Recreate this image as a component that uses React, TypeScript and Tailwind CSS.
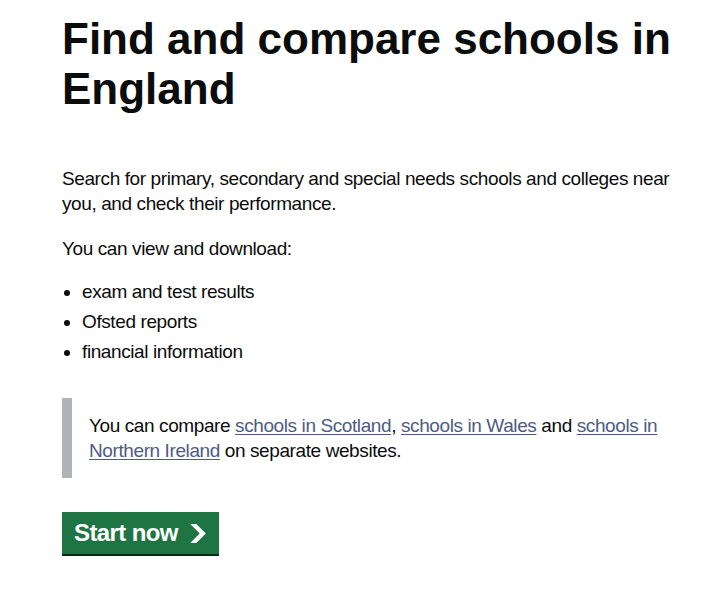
export default function App() {
  return (
    <div className="min-h-[592px] bg-white text-[#0b0c0c] font-['Liberation_Sans',Arial,sans-serif]">
      <main className="w-[620px] ml-[62px] pt-[14px]">
        <h1 className="text-[44px] leading-[50px] font-bold">Find and compare schools in England</h1>

        <div className="text-[19px] leading-[25px] tracking-[-0.4px]">
          <p className="mt-[52px]">
            Search for primary, secondary and special needs schools and colleges near you, and check their
            performance.
          </p>
          <p className="mt-5">You can view and download:</p>

          <ul className="mt-[18px] list-disc pl-5 flex flex-col gap-[5px]">
            <li>exam and test results</li>
            <li>Ofsted reports</li>
            <li>financial information</li>
          </ul>

          <div className="mt-[34px] border-l-[10px] border-[#b1b4b6] py-[15px] pl-[17px] pr-[15px]">
            You can compare{' '}
            <a href="#" className="text-[#4c5c85] underline underline-offset-2 decoration-1">
              schools in Scotland
            </a>
            ,{' '}
            <a href="#" className="text-[#4c5c85] underline underline-offset-2 decoration-1">
              schools in Wales
            </a>{' '}
            and{' '}
            <a href="#" className="text-[#4c5c85] underline underline-offset-2 decoration-1">
              schools in Northern Ireland
            </a>{' '}
            on separate websites.
          </div>
        </div>

        <a
          href="#"
          className="mt-[34px] inline-flex items-center gap-[11px] h-[42px] pl-[12px] pr-[12px] bg-[#1e7543] text-white text-[24px] tracking-[-0.6px] font-bold leading-none shadow-[0_2px_0_#002d18]"
        >
          Start now
          <svg width="18" height="19" viewBox="0 0 33 40" aria-hidden="true" focusable="false">
            <path fill="currentColor" d="M0 0h13l20 20-20 20H0l20-20z" />
          </svg>
        </a>
      </main>
    </div>
  )
}
